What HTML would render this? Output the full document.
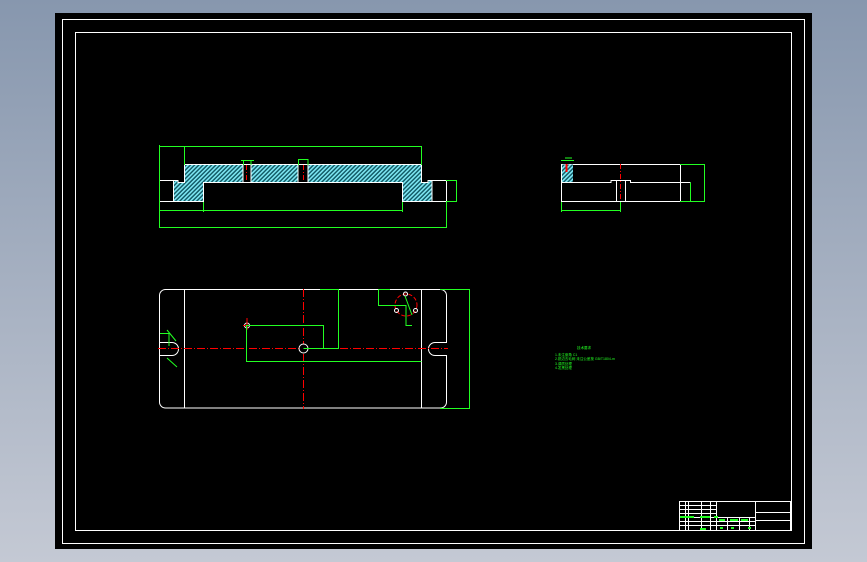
<!DOCTYPE html>
<html><head><meta charset="utf-8"><style>
html,body{margin:0;padding:0}
body{width:867px;height:562px;overflow:hidden;background:linear-gradient(#8797ae,#c4c9d4);font-family:"Liberation Sans",sans-serif}
svg{position:absolute;left:0;top:0}
</style></head><body>
<svg width="867" height="562" viewBox="0 0 867 562">
<defs>
<pattern id="h" width="3" height="3" patternUnits="userSpaceOnUse" patternTransform="rotate(45)">
<rect width="3" height="3" fill="#0e5560"/><rect width="1.6" height="3" fill="#7ee8f4"/>
</pattern>
</defs>
<rect x="55" y="13" width="757" height="536" fill="#000"/>
<rect x="62.5" y="19.5" width="742" height="524" fill="none" stroke="#fff" stroke-width="1"/>
<rect x="75.5" y="32.5" width="716" height="498" fill="none" stroke="#fff" stroke-width="1"/>

<g stroke-width="1" fill="none">
<path d="M184.5 164.5 H421.5 V182.5 H428 V180.5 H432 V201.5 H402.5 V182.5 H203.5 V201.5 H173.5 V180.5 H178 V182.5 H184.5 Z" fill="url(#h)" stroke="#fff"/>
<rect x="243" y="164.5" width="8" height="18" fill="#000" stroke="#fff"/>
<rect x="298" y="164.5" width="10" height="18" fill="#000" stroke="#fff"/>
<path d="M246.5 165V182 M303.5 165V182" stroke="#f00" stroke-dasharray="5,2,1,2"/>
<path d="M159.5 180.5H173.5 M159.5 201.5H173.5 M159.5 180.5V201.5 M432 180.5H446.5V201.5H432" stroke="#fff"/>
<g stroke="#2f2">
<path d="M159.5 146.5H421.5 M159.5 145V228 M184.5 146V165 M421.5 146V165"/>
<path d="M160 210.5H403 M203.5 202V212 M402.5 202V212"/>
<path d="M160 227.5H447 M446.5 202V228"/>
<path d="M446 180.5H456.5V201.5H446"/>
<path d="M241 160.5H254 M243.5 160V165 M251 160V165 M298.5 159.5H308 M298.5 159V165 M308 159V165"/>
</g>
</g>

<g stroke-width="1" fill="none">
<path d="M561.5 164.5H680.5V201.5H561.5Z" stroke="#fff"/>
<path d="M561.5 182.5H611 V180.5H630.5V182.5H690.5 M616.5 181V201 M625.5 181V201" stroke="#fff"/>
<path d="M562 164.5H573V182H562Z" fill="url(#h)"/>
<path d="M620.5 164V201" stroke="#f00" stroke-dasharray="5,2,1,2"/>
<path d="M566.5 164V172" stroke="#f00" stroke-width="2"/>
<g stroke="#2f2">
<path d="M680 164.5H704.5V201.5H680 M690.5 182.5V201.5 M561.5 202V212 M620.5 202V212 M561.5 210.5H620.5 M561 160.5H574 M565 158H572"/>
</g>
</g>

<g stroke-width="1" fill="none">
<rect x="159.5" y="289.5" width="287" height="118.5" rx="6" stroke="#fff"/>
<path d="M184.5 290V408 M421.5 290V408" stroke="#fff"/>
<path d="M160 342.5H172 A6 6 0 0 1 172 355.5H160" stroke="#fff" fill="#000"/>
<path d="M447 342.5H435 A6 6 0 0 0 435 355.5H447" stroke="#fff" fill="#000"/>
<path d="M158 348.5H448 M303.5 289V409" stroke="#f00" stroke-dasharray="8,2,1,2"/>
<circle cx="303.5" cy="348.5" r="4.5" stroke="#fff" fill="#000"/>
<circle cx="247" cy="325.5" r="2.5" stroke="#fff"/>
<path d="M243 325.5H251 M247 318V330" stroke="#f00"/>
<circle cx="406" cy="305" r="11" stroke="#f00" stroke-dasharray="4,2"/>
<circle cx="405.5" cy="294" r="2" stroke="#fff"/>
<circle cx="396.5" cy="310.5" r="2" stroke="#fff"/>
<circle cx="415.5" cy="310.5" r="2" stroke="#fff"/>
<g stroke="#2f2">
<path d="M246.5 325.5H323.5V348.5 M246.5 325V361.5H421.5 M303.5 348.5H338.5V289.5H320"/>
<path d="M378.5 289.5H390 M378.5 289.5V305.5H406 M406 305V325.5H412 M405 296L412 315"/>
<path d="M440 289.5H470 M440 408.5H470 M469.5 289.5V408.5"/>
<path d="M160 333.5H169V346 M167 330L176 341 M167 358L177 367"/>
</g>
</g>

<g fill="#2f2" font-size="3.5" font-family="Liberation Sans,sans-serif">
<text x="577" y="349">技术要求</text>
<text x="555" y="356">1.未注倒角 C1</text>
<text x="555" y="360">2.锐边去毛刺 未注公差按 GB/T1804-m</text>
<text x="555" y="365">3.调质处理</text>
<text x="555" y="369">4.发黑处理</text>
</g>

<g stroke="#fff" stroke-width="1" fill="none">
<rect x="679.5" y="501.5" width="111" height="29"/>
<path d="M716.5 502V530 M755.5 502V530 M755.5 512.5H791 M755.5 520.5H791"/>
<path d="M680 505.5H716 M680 509.5H716 M680 513.5H716 M680 517.5H755 M680 521.5H755 M680 525.5H755"/>
<path d="M685.5 502V530 M688.5 502V530 M701.5 502V530 M710.5 502V530 M727.5 517V530 M739.5 517V530 M749.5 517V530"/>
</g>
<g fill="#2f2">
<rect x="680" y="516" width="14" height="2"/><rect x="700" y="516" width="10" height="2"/><rect x="714" y="516" width="4" height="2"/>
<rect x="719" y="519" width="6" height="2"/><rect x="730" y="519" width="8" height="2"/><rect x="741" y="519" width="7" height="2"/>
<rect x="700" y="528" width="6" height="2"/><rect x="720" y="527" width="3" height="2"/><rect x="731" y="527" width="3" height="2"/><rect x="748" y="527" width="3" height="2"/>
</g>
</svg>
</body></html>
